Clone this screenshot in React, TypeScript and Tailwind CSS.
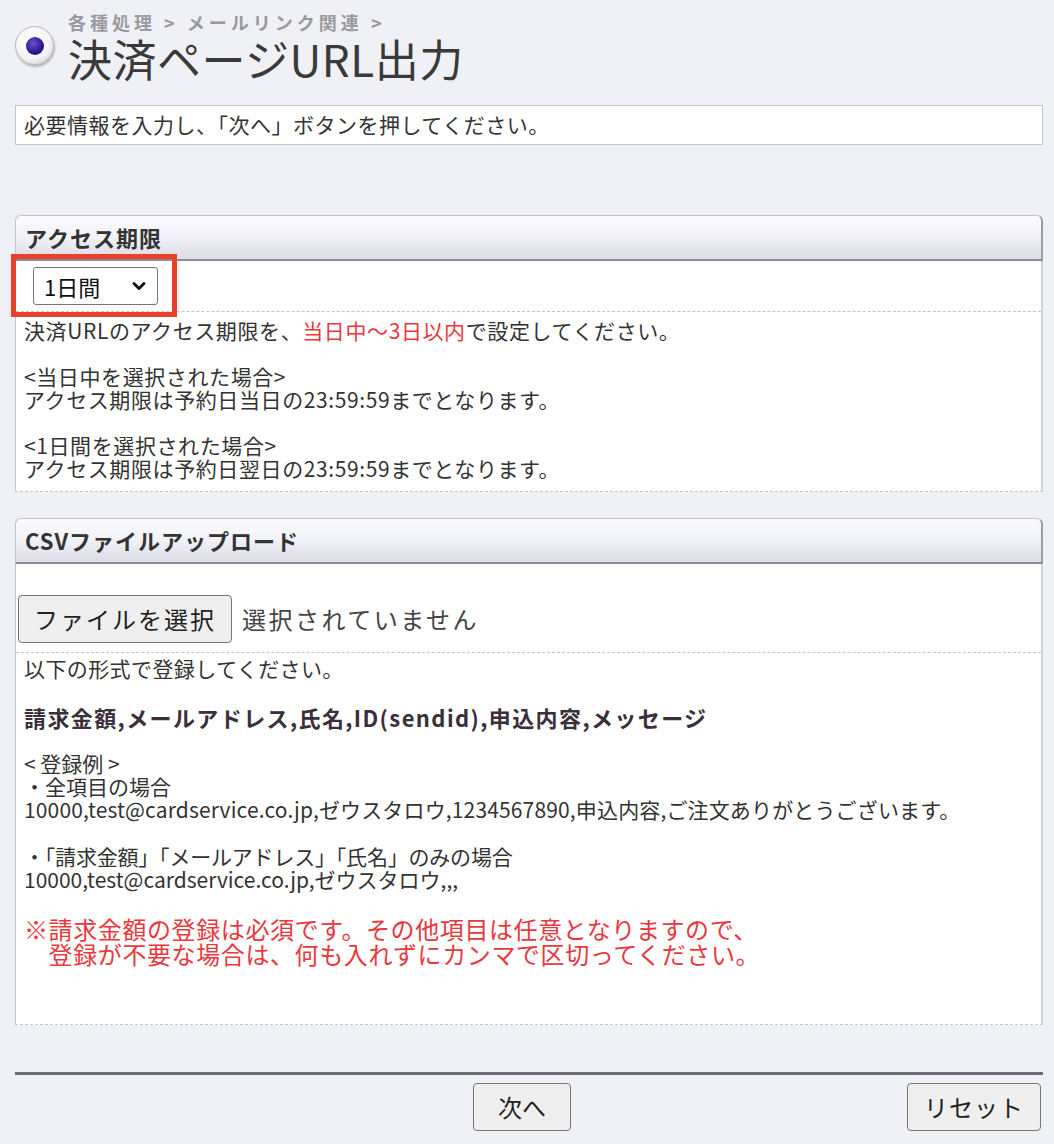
import { ChevronDown } from 'lucide-react';

const font = '[font-family:"Noto_Sans_CJK_JP","Noto_Sans",sans-serif]';

function SectionHeader({ title }: { title: string }) {
  return (
    <div className="h-[46px] flex items-center px-[9px] rounded-t-[6px] border border-[#c4c5cc] border-b-2 border-b-[#8c8d94] border-r-2 border-r-[#9c9da5] bg-gradient-to-b from-[#fbfbfe] via-[#f1f2f8] to-[#dcdde5]">
      <span className="text-[22px] font-bold text-[#333] tracking-[1px]">{title}</span>
    </div>
  );
}

export default function App() {
  return (
    <div className={`min-h-[1144px] bg-[#f0f1f6] text-[#333] ${font}`}>
      {/* Page title */}
      <div className="flex pt-[10px] pl-[15px]">
        <div className="mt-[16px] w-[39px] h-[39px] rounded-full border border-[#b8b8bd] bg-[radial-gradient(circle_at_45%_40%,#ffffff_0%,#f5f5f7_55%,#c4c4c9_100%)] shadow-[1px_2px_2px_rgba(0,0,0,0.25)] flex items-center justify-center">
          <div className="w-[18px] h-[18px] rounded-full bg-[radial-gradient(circle_at_40%_35%,#6a4fd0_0%,#2f158a_60%,#1a0a5c_100%)]" />
        </div>
        <div className="ml-[14px]">
          <div className="text-[18px] leading-[24px] font-bold text-[#9a9a9e] tracking-[4px]">
            各種処理 &gt; メールリンク関連 &gt;
          </div>
          <h1 className="text-[44px] leading-[48px] text-[#3a3a3a] tracking-[0.5px]">決済ページURL出力</h1>
        </div>
      </div>

      <div className="pl-[15px] pr-[11px]">
        {/* Instruction */}
        <div className="mt-[23px] h-[40px] flex items-center px-[8px] bg-white border border-[#c8c8cc] text-[21px] tracking-[0.5px]">
          必要情報を入力し、「次へ」ボタンを押してください。
        </div>

        {/* Access period */}
        <div className="mt-[70px]">
          <SectionHeader title="アクセス期限" />
          <div className="bg-white border-l border-r-2 border-l-[#c8c8cc] border-r-[#d4d4d8] border-b border-b-[#c4c4c8] border-dashed [border-left-style:solid] [border-right-style:solid]">
            <div className="relative pt-[6px] pb-[6px] pl-[17px] border-b border-dashed border-[#c4c4c8]">
              <div className="w-[125px] h-[38px] flex items-center justify-between pl-[10px] pr-[8px] border border-[#767676] rounded-[3px] bg-white text-[22px] text-[#111]">
                <span>1日間</span>
                <ChevronDown size={20} strokeWidth={3.5} className="text-[#111]" />
              </div>
              <div className="absolute top-[-7px] left-[-5px] w-[166px] h-[63px] border-[5px] border-[#e8402a]" />
            </div>
            <div className="pt-[7px] pb-[11px] pl-[8px] text-[21px] leading-[23px] tracking-[0.6px]">
              <p>
                決済URLのアクセス期限を、<span className="text-[#e8383d]">当日中〜3日以内</span>で設定してください。
              </p>
              <p className="mt-[23px]">&lt;当日中を選択された場合&gt;</p>
              <p>アクセス期限は予約日当日の23:59:59までとなります。</p>
              <p className="mt-[23px]">&lt;1日間を選択された場合&gt;</p>
              <p>アクセス期限は予約日翌日の23:59:59までとなります。</p>
            </div>
          </div>
        </div>

        {/* CSV upload */}
        <div className="mt-[26px]">
          <SectionHeader title="CSVファイルアップロード" />
          <div className="bg-white border-l border-r-2 border-l-[#c8c8cc] border-r-[#d4d4d8] border-b border-b-[#c4c4c8] border-dashed [border-left-style:solid] [border-right-style:solid]">
            <div className="pt-[31px] pb-[9px] pl-[2px] flex items-center gap-[10px] border-b border-dashed border-[#c4c4c8]">
              <button className="h-[48px] px-[15px] text-[24px] tracking-[2px] text-[#222] bg-[#efefef] border border-[#767676] rounded-[4px]">
                ファイルを選択
              </button>
              <span className="text-[24px] tracking-[2.5px] text-[#444]">選択されていません</span>
            </div>
            <div className="pt-[4px] pb-[58px] pl-[8px] text-[21px] leading-[23px]">
              <p className="tracking-[0.4px]">以下の形式で登録してください。</p>
              <p className="mt-[24px] text-[22px] leading-[26px] font-bold text-[#3a2f3a] tracking-[1.4px]">
                請求金額,メールアドレス,氏名,ID(sendid),申込内容,メッセージ
              </p>
              <p className="mt-[22px]">&lt; 登録例 &gt;</p>
              <p>・全項目の場合</p>
              <p className="tracking-[0.15px]">
                10000,test@cardservice.co.jp,ゼウスタロウ,1234567890,申込内容,ご注文ありがとうございます。
              </p>
              <p className="mt-[24px] tracking-[-0.2px]">・「請求金額」「メールアドレス」「氏名」のみの場合</p>
              <p>10000,test@cardservice.co.jp,ゼウスタロウ,,,</p>
              <div className="mt-[25px] text-[24px] leading-[25px] text-[#e8383d] tracking-[0.6px]">
                <p>※請求金額の登録は必須です。その他項目は任意となりますので、</p>
                <p>　登録が不要な場合は、何も入れずにカンマで区切ってください。</p>
              </div>
            </div>
          </div>
        </div>

        {/* Footer actions */}
        <div className="mt-[47px] h-[3px] bg-[#6b6b70]" />
        <div className="mt-[8px] grid grid-cols-[1fr_auto_1fr] items-center">
          <div />
          <button className="h-[48px] w-[98px] mr-[14px] text-[24px] text-[#222] bg-[#efefef] border border-[#767676] rounded-[4px]">
            次へ
          </button>
          <div className="flex justify-end">
            <button className="h-[48px] w-[134px] mr-[2px] text-[24px] tracking-[1px] text-[#222] bg-[#efefef] border border-[#767676] rounded-[4px]">
              リセット
            </button>
          </div>
        </div>
      </div>
    </div>
  );
}
